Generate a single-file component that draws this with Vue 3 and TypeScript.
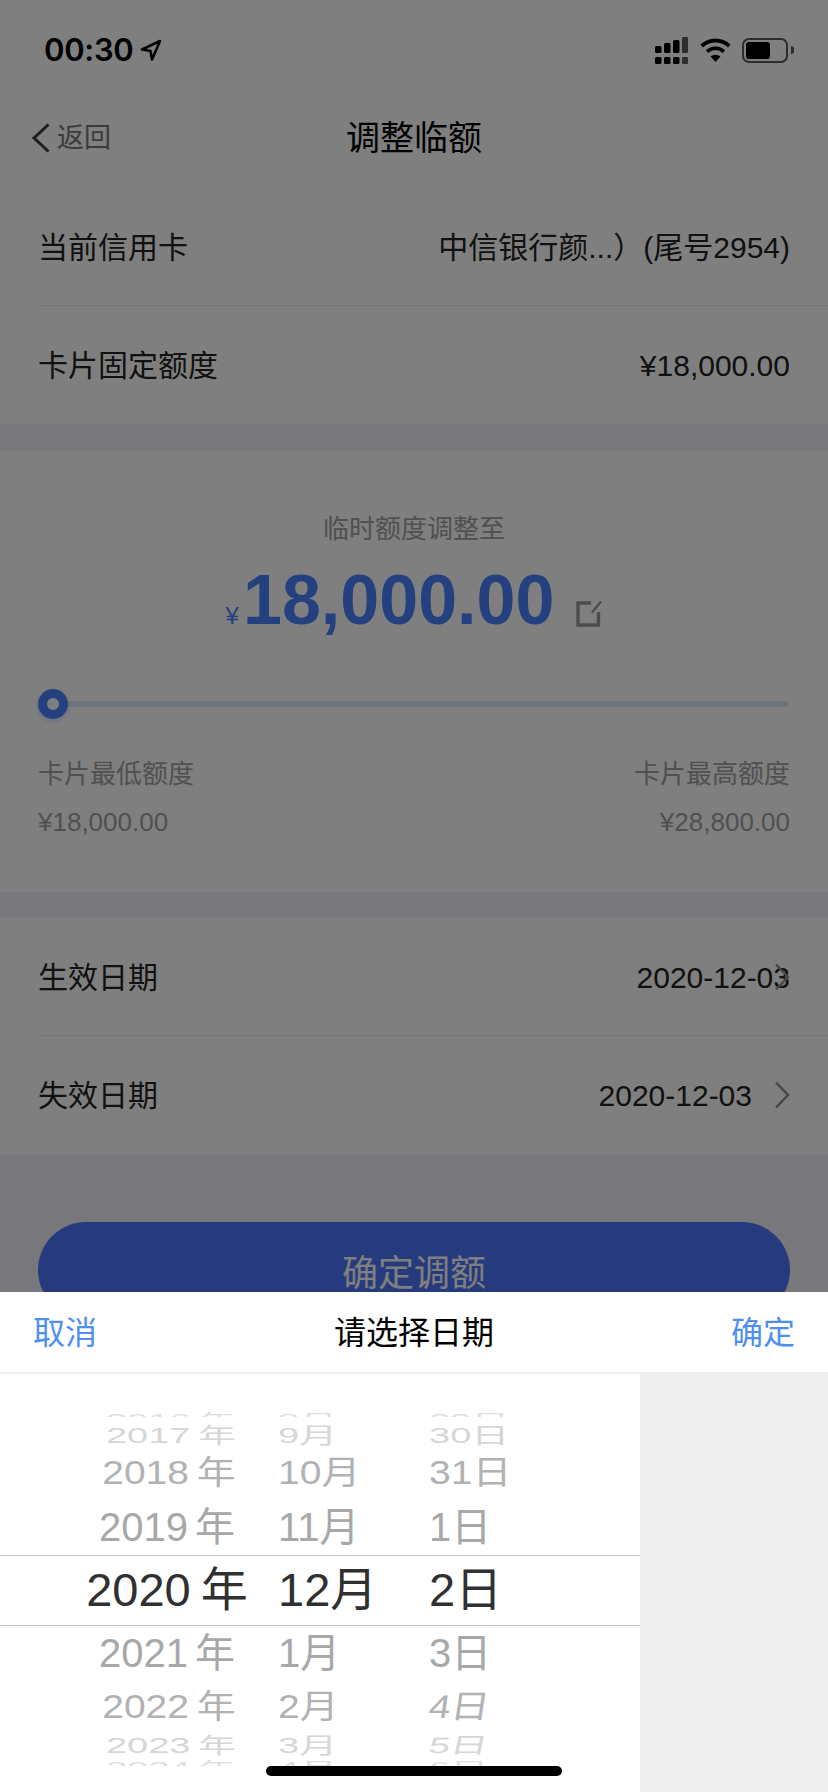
<script setup lang="ts">
interface RowSpec {
  height: number
  line: number
  gapAfter: number
  size: number
  scaleY: number
  color: string
  clip: boolean
  yearShift: number
  yearGap: number
}

const rows: RowSpec[] = [
  { height: 12, line: 32, gapAfter: 8, size: 38, scaleY: 0.42, color: '#dedede', clip: true, yearShift: 4, yearGap: -3 },
  { height: 20, line: 20, gapAfter: 0, size: 38, scaleY: 0.58, color: '#d6d6d6', clip: false, yearShift: 4, yearGap: -3 },
  { height: 56, line: 56, gapAfter: 0, size: 39, scaleY: 0.84, color: '#b2b2b2', clip: false, yearShift: 2, yearGap: -3 },
  { height: 52, line: 52, gapAfter: 0, size: 40, scaleY: 1, color: '#a8a8a8', clip: false, yearShift: 0, yearGap: -4 },
  { height: 74, line: 74, gapAfter: 0, size: 47, scaleY: 1, color: '#303030', clip: false, yearShift: 0, yearGap: -3 },
  { height: 52, line: 52, gapAfter: 0, size: 40, scaleY: 1, color: '#a8a8a8', clip: false, yearShift: 0, yearGap: -4 },
  { height: 56, line: 56, gapAfter: 0, size: 39, scaleY: 0.84, color: '#b2b2b2', clip: false, yearShift: 2, yearGap: -3 },
  { height: 20, line: 20, gapAfter: 0, size: 38, scaleY: 0.58, color: '#d6d6d6', clip: false, yearShift: 4, yearGap: -3 },
  { height: 11, line: 28, gapAfter: 0, size: 38, scaleY: 0.42, color: '#dedede', clip: true, yearShift: 4, yearGap: -3 }
]

const columns = [
  { key: 'year', items: ['2016 年', '2017 年', '2018 年', '2019 年', '2020 年', '2021 年', '2022 年', '2023 年', '2024 年'] },
  { key: 'month', items: ['8月', '9月', '10月', '11月', '12月', '1月', '2月', '3月', '4月'] },
  { key: 'day', items: ['29日', '30日', '31日', '1日', '2日', '3日', '4日', '5日', '6日'] }
]

function cellStyle(r: RowSpec) {
  return {
    height: r.height + 'px',
    lineHeight: r.line + 'px',
    marginBottom: r.gapAfter + 'px',
    overflow: r.clip ? 'hidden' : 'visible'
  }
}

function textStyle(r: RowSpec, col: string, i: number) {
  const skew = col === 'day' && (i === 6 || i === 7) ? ' skewX(-7deg)' : ''
  const shift = col === 'year' ? r.yearShift : 0
  return {
    fontSize: r.size + 'px',
    color: r.color,
    wordSpacing: col === 'year' ? r.yearGap + 'px' : 'normal',
    transform: `translateX(${shift}px) scaleY(${r.scaleY})${skew}`
  }
}
</script>

<template>
  <div class="screen">
    <div class="page">
      <header class="status">
        <div class="status-left">
          <span class="time">00:30</span>
          <svg class="loc" width="22" height="24" viewBox="0 0 22 24">
            <path d="M20 3 L2 11.5 L10.5 13 L12 21.5 Z" fill="none" stroke="#000" stroke-width="2.6" stroke-linejoin="round" />
          </svg>
        </div>
        <div class="status-right">
          <svg width="34" height="27" viewBox="0 0 34 27">
            <rect x="0" y="9" width="6.5" height="7" rx="1.5" fill="#000" />
            <rect x="9" y="6" width="6.5" height="10" rx="1.5" fill="#000" />
            <rect x="18" y="3" width="6.5" height="13" rx="1.5" fill="#000" />
            <rect x="27" y="0" width="6" height="16" rx="1" fill="#5c5c5c" />
            <rect x="0" y="20" width="6.5" height="7" rx="1.5" fill="#000" />
            <rect x="9" y="20" width="6.5" height="7" rx="1.5" fill="#000" />
            <rect x="18" y="20" width="6.5" height="7" rx="1.5" fill="#000" />
            <rect x="27" y="20" width="6" height="7" rx="1" fill="#5c5c5c" />
          </svg>
          <svg class="wifi" width="31" height="24" viewBox="0 0 31 24">
            <path d="M1.7 8 A20 20 0 0 1 29.3 8" fill="none" stroke="#000" stroke-width="3.8" />
            <path d="M7 13.6 A12.5 12.5 0 0 1 24 13.6" fill="none" stroke="#000" stroke-width="3.6" />
            <path d="M15.5 24 L10.5 18.6 A7.5 7.5 0 0 1 20.5 18.6 Z" fill="#000" />
          </svg>
          <div class="battery"><div class="battery-fill"></div></div>
          <div class="battery-cap"></div>
        </div>
      </header>

      <nav class="nav">
        <div class="back">
          <svg width="20" height="30" viewBox="0 0 20 30">
            <path d="M17.5 1.5 L3 15 L17.5 28.5" fill="none" stroke="#3a3a3a" stroke-width="3" />
          </svg>
          <span>返回</span>
        </div>
        <h1 class="title">调整临额</h1>
      </nav>

      <section class="group">
        <div class="row divided">
          <span>当前信用卡</span>
          <span>中信银行颜...）(尾号2954)</span>
        </div>
        <div class="row">
          <span>卡片固定额度</span>
          <span>¥18,000.00</span>
        </div>
      </section>

      <section class="group limit">
        <div class="limit-caption">临时额度调整至</div>
        <div class="amount">
          <span class="currency">¥</span>
          <span class="figure">18,000.00</span>
          <svg class="edit" width="26" height="27" viewBox="0 0 26 27">
            <path d="M15 3 H2 V25 H22.5 V12" fill="none" stroke="#999" stroke-width="3.4" />
            <path d="M25 1.5 L16 12.5" fill="none" stroke="#999" stroke-width="2.4" />
          </svg>
        </div>
        <div class="slider">
          <div class="track"></div>
          <div class="thumb"></div>
        </div>
        <div class="bounds">
          <span>卡片最低额度</span>
          <span>卡片最高额度</span>
        </div>
        <div class="bounds values">
          <span>¥18,000.00</span>
          <span>¥28,800.00</span>
        </div>
      </section>

      <section class="group">
        <div class="row divided">
          <span>生效日期</span>
          <span>2020-12-03</span>
          <svg class="chev" width="16" height="28" viewBox="0 0 16 28">
            <path d="M2 1.5 L14 14 L2 26.5" fill="none" stroke="#8c8c8c" stroke-width="2.4" />
          </svg>
        </div>
        <div class="row">
          <span>失效日期</span>
          <span class="with-chev">2020-12-03</span>
          <svg class="chev" width="16" height="28" viewBox="0 0 16 28">
            <path d="M2 1.5 L14 14 L2 26.5" fill="none" stroke="#8c8c8c" stroke-width="2.4" />
          </svg>
        </div>
      </section>

      <div class="cta-wrap">
        <button class="cta">确定调额</button>
      </div>
    </div>

    <div class="scrim"></div>

    <div class="sheet">
      <div class="sheet-head">
        <span class="action">取消</span>
        <span class="sheet-title">请选择日期</span>
        <span class="action">确定</span>
      </div>
      <div class="sheet-body">
        <div class="picker">
          <div class="band"></div>
          <div class="wheels">
            <div v-for="col in columns" :key="col.key" class="wheel" :class="col.key">
              <div v-for="(r, i) in rows" :key="i" class="cell" :style="cellStyle(r)">
                <span class="cell-text" :style="textStyle(r, col.key, i)">{{ col.items[i] }}</span>
              </div>
            </div>
          </div>
        </div>
        <div class="picker-side"></div>
      </div>
    </div>

    <div class="home-bar"></div>
  </div>
</template>

<style>
html, body { margin: 0; padding: 0; background: #fff; }
</style>

<style scoped>
.screen {
  position: relative;
  width: 828px;
  height: 1792px;
  overflow: hidden;
  font-family: "Liberation Sans", "Noto Sans CJK SC", sans-serif;
  color: #000;
}
.page {
  display: flex;
  flex-direction: column;
  height: 100%;
  background: #eeeef8;
}
.status {
  height: 88px;
  background: #fff;
  display: flex;
  justify-content: space-between;
  align-items: center;
  padding: 24px 34px 12px 44px;
  box-sizing: border-box;
}
.status-left { display: flex; align-items: center; gap: 7px; }
.time {
  font-family: Inter, "Liberation Sans", sans-serif;
  font-weight: 600;
  font-size: 31px;
  line-height: 36px;
  letter-spacing: -0.3px;
}
.status-right { display: flex; align-items: center; }
.wifi { margin-left: 11px; }
.battery {
  margin-left: 11px;
  width: 46px;
  height: 25px;
  box-sizing: border-box;
  border: 2px solid #5a5a5a;
  border-radius: 7px;
  padding: 2px;
}
.battery-fill { width: 24px; height: 100%; background: #000; border-radius: 3px; }
.battery-cap {
  margin-left: 3px;
  width: 3px;
  height: 8px;
  background: #5a5a5a;
  border-radius: 0 3px 3px 0;
}
.nav {
  position: relative;
  height: 100px;
  background: #fff;
  display: flex;
  align-items: center;
  justify-content: center;
}
.back {
  position: absolute;
  left: 31px;
  top: 35px;
  display: flex;
  align-items: center;
  gap: 6px;
  font-size: 27px;
  line-height: 30px;
  color: #777;
}
.title { margin: 0; font-weight: 400; font-size: 34px; line-height: 40px; color: #000; }
.group { background: #fff; margin-bottom: 27px; }
.row {
  position: relative;
  height: 118px;
  margin-left: 38px;
  padding: 2px 38px 0 0;
  box-sizing: border-box;
  display: flex;
  justify-content: space-between;
  align-items: center;
  font-size: 30px;
  line-height: 36px;
  color: #222;
}
.divided { border-bottom: 1px solid #ededed; }
.with-chev { margin-right: 38px; }
.chev { position: absolute; right: 38px; top: 45px; }
.limit { height: 441px; margin-bottom: 26px; box-sizing: border-box; padding: 0 38px; overflow: hidden; }
.limit-caption {
  margin-top: 62px;
  font-size: 26px;
  line-height: 32px;
  text-align: center;
  color: #a0a0a0;
}
.amount {
  margin-top: 13px;
  display: flex;
  align-items: baseline;
  justify-content: center;
  color: #4880ff;
  height: 84px;
}
.currency { font-size: 24px; margin-right: 4px; }
.figure { font-size: 70px; font-weight: 700; line-height: 84px; }
.edit { margin-left: 22px; align-self: flex-end; margin-bottom: 15px; }
.slider { position: relative; height: 30px; margin-top: 47px; }
.track {
  position: absolute;
  left: 0;
  right: 2px;
  top: 12px;
  height: 6px;
  background: #dfe8f7;
  border-radius: 3px;
}
.thumb {
  position: absolute;
  left: 0;
  top: 0;
  width: 30px;
  height: 30px;
  box-sizing: border-box;
  border: 9px solid #4880ff;
  border-radius: 50%;
  background: #fff;
  box-shadow: 0 2px 5px rgba(72, 128, 255, 0.3);
}
.bounds {
  display: flex;
  justify-content: space-between;
  margin-top: 39px;
  font-size: 26px;
  line-height: 32px;
  color: #a0a0a0;
}
.values { margin-top: 16px; }
.cta-wrap { padding: 41px 38px 0; }
.cta {
  display: block;
  width: 100%;
  height: 96px;
  border: 0;
  border-radius: 48px;
  background: #4c76fa;
  color: #fff;
  font-family: inherit;
  font-size: 36px;
  line-height: 96px;
  padding: 4px 0 0;
}
.scrim {
  position: absolute;
  inset: 0;
  background: rgba(0, 0, 0, 0.5);
}
.sheet {
  position: absolute;
  left: 0;
  right: 0;
  bottom: 0;
  height: 500px;
  background: #fff;
  display: flex;
  flex-direction: column;
}
.sheet-head {
  height: 82px;
  flex: none;
  box-sizing: border-box;
  padding: 0 33px 4px;
  border-bottom: 2px solid #efefef;
  display: flex;
  justify-content: space-between;
  align-items: center;
  font-size: 32px;
}
.action { color: #4f8ff0; }
.sheet-title { color: #000; }
.sheet-body { flex: 1; display: flex; }
.picker { position: relative; width: 640px; box-sizing: border-box; padding-top: 31px; }
.picker-side { flex: 1; background: #efefef; }
.band {
  position: absolute;
  left: 0;
  right: 0;
  top: 181px;
  height: 69px;
  border-top: 1px solid #c8c8c8;
  border-bottom: 1px solid #c8c8c8;
}
.wheels { position: relative; display: flex; }
.wheel { display: flex; flex-direction: column; }
.year { width: 270px; padding-left: 64px; box-sizing: border-box; align-items: center; }
.month { width: 150px; padding-left: 8px; box-sizing: border-box; }
.day { width: 150px; padding-left: 9px; box-sizing: border-box; }
.cell { white-space: nowrap; }
.cell-text { display: inline-block; }
.home-bar {
  position: absolute;
  left: 266px;
  top: 1766px;
  width: 296px;
  height: 10px;
  border-radius: 5px;
  background: #000;
}
</style>
